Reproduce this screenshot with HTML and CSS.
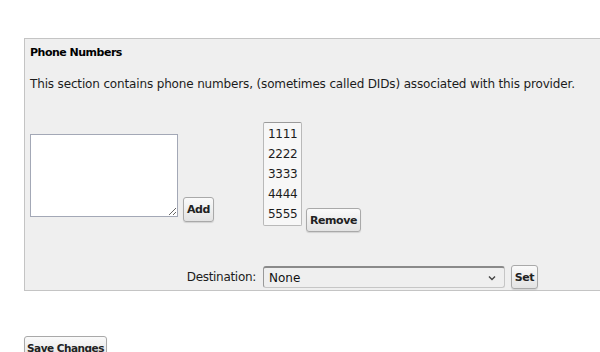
FILE: index.html
```html
<!DOCTYPE html>
<html>
<head>
<meta charset="utf-8">
<link rel="stylesheet" href="styles.css">
</head>
<body>
<div class="page">
  <div class="panel">
    <h3 class="title">Phone Numbers</h3>
    <p class="desc">This section contains phone numbers, (sometimes called DIDs) associated with this provider.</p>
    <div class="grid">
      <div class="cell add-cell">
        <textarea class="entry"></textarea>
        <button class="btn btn-add">Add</button>
      </div>
      <div class="cell list-cell">
        <div class="listbox">
          <div class="opt">1111</div>
          <div class="opt">2222</div>
          <div class="opt">3333</div>
          <div class="opt">4444</div>
          <div class="opt">5555</div>
        </div>
        <button class="btn btn-remove">Remove</button>
      </div>
      <label class="dest-label">Destination:</label>
      <div class="cell dest-cell">
        <div class="select"><span>None</span><svg class="chev" width="8" height="6" viewBox="0 0 8 6"><path d="M1 1.5 L4 4.5 L7 1.5" fill="none" stroke="#444" stroke-width="1.4"/></svg></div>
        <button class="btn btn-set">Set</button>
      </div>
    </div>
  </div>
  <button class="btn btn-save">Save Changes</button>
</div>
</body>
</html>
```
FILE: styles.css
```css
html, body {
  margin: 0;
  padding: 0;
  background: #ffffff;
  overflow: hidden;
}
body {
  font-family: "DejaVu Sans", Tahoma, sans-serif;
  font-size: 11px;
  color: #1c1c1c;
}
.page {
  padding: 38px 0 0 24px;
}
.panel {
  background: #efefef;
  border: 1px solid #c4c4c4;
  border-right: none;
  padding: 7px 0 1px 5px;
}
.title {
  margin: 0;
  font-size: 11px;
  line-height: 14px;
  font-weight: bold;
  color: #000;
  letter-spacing: -0.5px;
}
.desc {
  margin: 17px 0 0 0;
  font-size: 12px;
  line-height: 14px;
  letter-spacing: -0.15px;
}
.grid {
  display: grid;
  grid-template-columns: 233px auto;
  row-gap: 33px;
  margin-top: 31px;
  align-items: start;
}
.cell {
  display: flex;
  align-items: flex-end;
}
.entry {
  box-sizing: border-box;
  width: 148px;
  height: 83px;
  margin: 12px 5px 5px 0;
  border: 1px solid #a3a8b6;
  background: #fff;
  padding: 2px;
  font-family: inherit;
}
.btn {
  font-family: "DejaVu Sans", Tahoma, sans-serif;
  font-size: 11px;
  font-weight: bold;
  color: #222;
  letter-spacing: -0.4px;
  white-space: nowrap;
  background: linear-gradient(#fafafa, #e3e3e3);
  border: 1px solid #a9a9a9;
  border-radius: 3px;
  box-shadow: 0 1px 1px rgba(0,0,0,0.12);
  padding: 0;
  height: 25px;
}
.btn-add { width: 31px; }
.btn-remove { width: 55px; height: 24px; }
.btn-set { width: 27px; height: 24px; margin-left: 6px; }
.btn-save { width: 83px; height: 24px; margin-top: 45px; font-size: 10.5px; letter-spacing: -0.5px; }
.listbox {
  box-sizing: border-box;
  width: 39px;
  height: 104px;
  margin: 0 4px 6px 0;
  background: #f7f7f7;
  border: 1px solid #b9b9b9;
  border-top-color: #9a9a9a;
  border-radius: 2px;
  padding: 1px 0 0 4px;
  overflow: hidden;
  font-size: 12px;
  letter-spacing: -0.3px;
}
.opt {
  height: 20px;
  line-height: 20px;
}
.dest-label {
  align-self: center;
  text-align: right;
  padding-right: 7px;
  line-height: 24px;
  font-size: 12px;
  letter-spacing: -0.3px;
}
.dest-cell {
  align-items: center;
}
.select {
  box-sizing: border-box;
  width: 242px;
  height: 22px;
  display: flex;
  align-items: center;
  justify-content: space-between;
  padding: 0 8px 0 5px;
  background: #efefef;
  border: 1px solid #c6c6c6;
  border-top: 2px solid #8a8a8a;
  border-left-color: #999;
  border-radius: 3px;
  font-size: 12px;
  color: #111;
}
.chev { display: block; }
```
